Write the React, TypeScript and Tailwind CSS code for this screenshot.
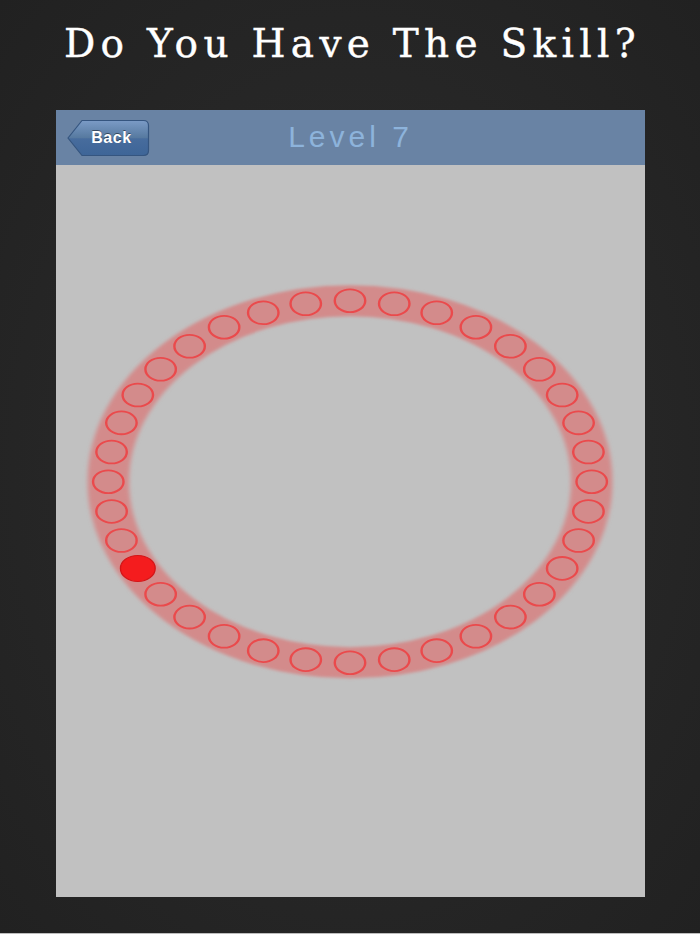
import React from 'react';

// Ring of 36 slots: a circle stretched sideways into an ellipse.
const SLOTS = 36;
const RADIUS = 181;
const STRETCH = 1.3354;
const ACTIVE = 24;

function slotPos(k: number) {
  const t = (k * 360) / SLOTS;
  const phi = ((t + 1.6 * Math.sin((2 * t * Math.PI) / 180)) * Math.PI) / 180;
  return { x: RADIUS * Math.sin(phi), y: -RADIUS * Math.cos(phi) };
}

function Ring() {
  return (
    <svg width="589" height="732" viewBox="0 0 589 732" className="block">
      <defs>
        <filter id="soft" x="-10%" y="-10%" width="120%" height="120%">
          <feGaussianBlur stdDeviation="1.4" />
        </filter>
      </defs>
      <g transform={`translate(294 316.7) scale(${STRETCH} 1)`}>
        <circle r={RADIUS} fill="none" stroke="#d38b8b" strokeWidth="31" filter="url(#soft)" />
        {Array.from({ length: SLOTS }, (_, k) => {
          const p = slotPos(k);
          if (k === ACTIVE) {
            return (
              <circle key={k} cx={p.x} cy={p.y} r="13" fill="#f41c1e" stroke="#d41517" strokeWidth="1" />
            );
          }
          return (
            <circle
              key={k}
              cx={p.x}
              cy={p.y}
              r="11.4"
              fill="#d38b8b"
              stroke="#ea4a4c"
              strokeWidth="1.8"
            />
          );
        })}
      </g>
    </svg>
  );
}

function BackButton() {
  return (
    <button className="relative flex h-[38px] w-[83px] items-center justify-center pl-[6px]">
      <svg width="83" height="38" viewBox="0 0 83 38" className="absolute inset-0">
        <defs>
          <linearGradient id="backFill" x1="0" y1="0" x2="0" y2="1">
            <stop offset="0" stopColor="#7b9bc6" />
            <stop offset="0.5" stopColor="#56799f" />
            <stop offset="0.52" stopColor="#476c9d" />
            <stop offset="1" stopColor="#3e6597" />
          </linearGradient>
        </defs>
        <path
          d="M1 19 L15 1.5 H76.5 Q81.5 1.5 81.5 6.5 V31.5 Q81.5 36.5 76.5 36.5 H15 Z"
          fill="url(#backFill)"
          stroke="#35557f"
          strokeWidth="1.2"
        />
      </svg>
      <span
        className="relative text-[16px] font-bold tracking-[0.6px] text-white [text-shadow:0_-1px_0_rgba(0,0,0,0.45)]"
        style={{ fontFamily: '"Liberation Sans", Arial, sans-serif' }}
      >
        Back
      </span>
    </button>
  );
}

export default function App() {
  return (
    <div className="flex h-[934px] w-[700px] flex-col bg-[#262626] bg-[radial-gradient(ellipse_at_center,#2c2c2c_0%,#262626_60%,#212121_100%)]">
      <div className="flex h-[110px] items-start justify-center pt-[21px]">
        <h1
          className="-mr-[5px] text-[39px] leading-[46px] tracking-[5.3px] text-white [-webkit-text-stroke:0.4px_white]"
          style={{ fontFamily: '"DejaVu Serif", "Liberation Serif", serif' }}
        >
          Do You Have The Skill?
        </h1>
      </div>

      <div className="ml-[56px] flex h-[787px] w-[589px] flex-col">
        <div className="relative flex h-[55px] items-center bg-[#6983a4] pl-[11px]">
          <BackButton />
          <span
            className="absolute left-0 right-0 top-[10px] text-center text-[30px] leading-[34px] tracking-[4px] text-[#8db3db]"
            style={{ fontFamily: '"Liberation Sans", Arial, sans-serif' }}
          >
            Level 7
          </span>
        </div>
        <div className="flex-1 bg-[#c1c1c1]">
          <Ring />
        </div>
      </div>

      <div className="flex-1" />
      <div className="h-[1px] bg-[#bdbdbd]" />
    </div>
  );
}
